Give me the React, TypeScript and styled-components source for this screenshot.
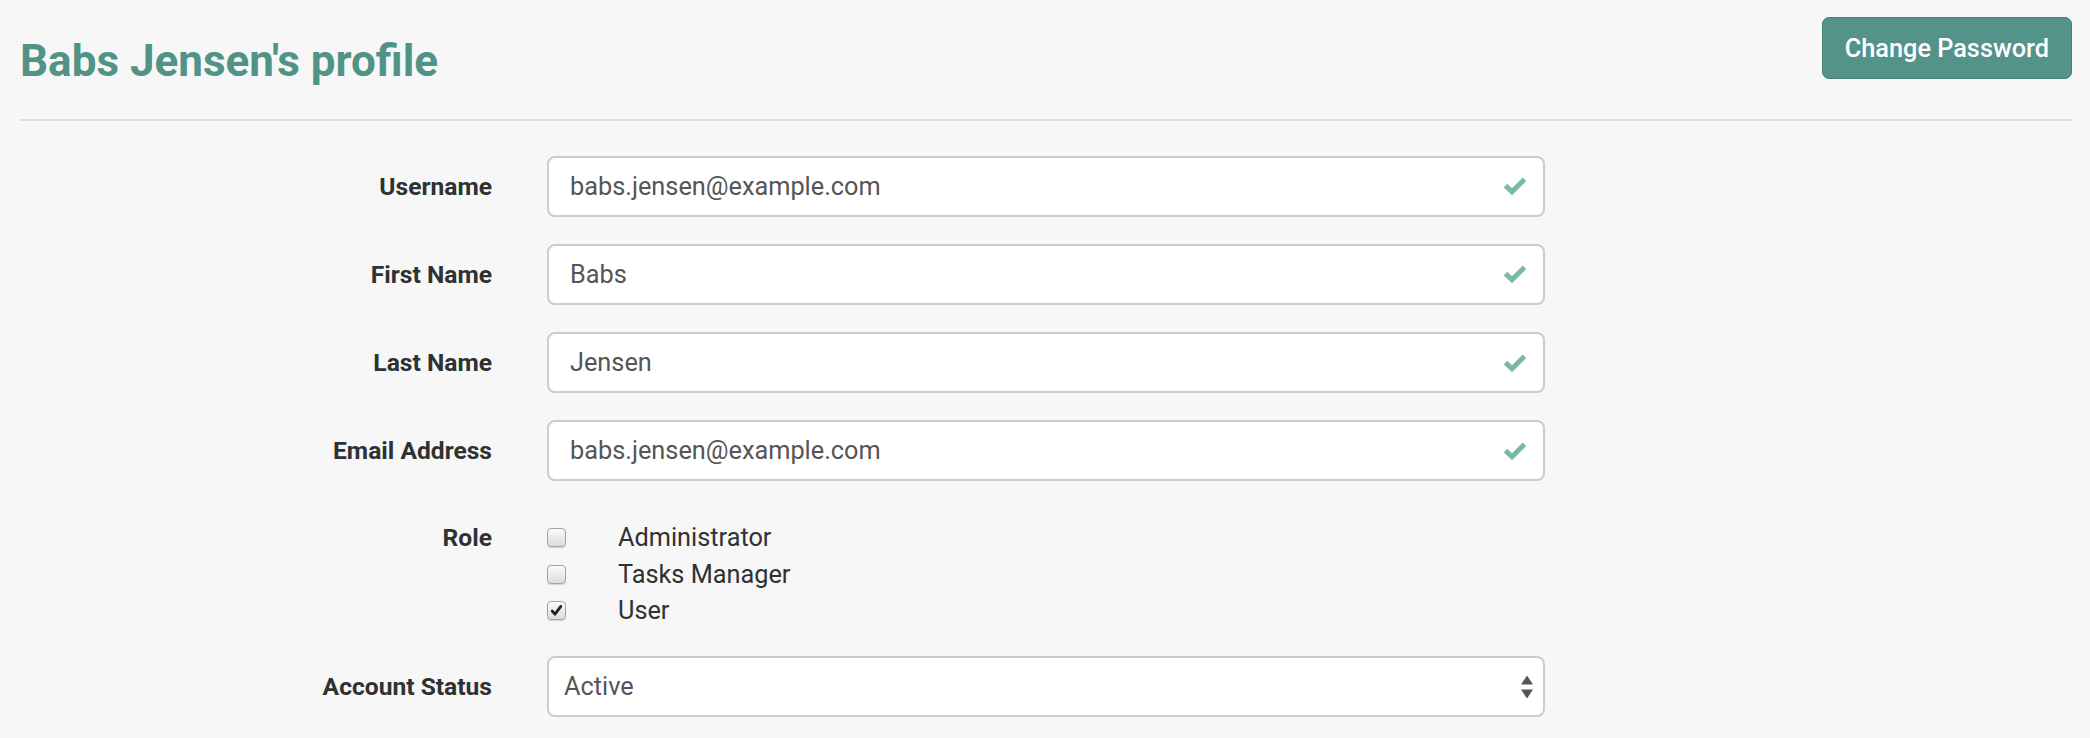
import React from "react";
import styled, { createGlobalStyle } from "styled-components";

const GlobalStyle = createGlobalStyle`
  html, body {
    margin: 0;
    padding: 0;
    background: #f7f7f7;
  }
  body {
    font-family: Roboto, "Helvetica Neue", Arial, sans-serif;
    color: #333;
  }
  * {
    box-sizing: border-box;
  }
`;

const Page = styled.div`
  padding: 0 18px 0 20px;
  min-height: 738px;
`;

const Header = styled.header`
  display: flex;
  justify-content: space-between;
  align-items: flex-start;
  padding-top: 17px;
`;

const Title = styled.h1`
  margin: 20px 0 0;
  font-size: 44px;
  line-height: 48px;
  font-weight: 700;
  color: #519487;
`;

const PrimaryButton = styled.button`
  height: 62px;
  padding: 0 22px;
  background: #53938a;
  border: 1px solid #47837a;
  border-radius: 7px;
  color: #fff;
  font-family: inherit;
  font-size: 25.3px;
  font-weight: 500;
  cursor: pointer;
`;

const Divider = styled.hr`
  margin: 34px 0 0;
  border: 0;
  height: 2px;
  background: #dddddd;
`;

const Form = styled.form`
  margin-top: 34.5px;
`;

const Row = styled.div<{ $top?: boolean }>`
  display: grid;
  grid-template-columns: 472px 998px;
  column-gap: 55px;
  align-items: ${(p) => (p.$top ? "start" : "center")};
  margin-bottom: 27.3px;
  padding-top: ${(p) => (p.$top ? "11px" : "0")};
`;

const Label = styled.label<{ $line?: boolean }>`
  text-align: right;
  font-size: 24.6px;
  font-weight: 700;
  color: #2f3133;
  line-height: ${(p) => (p.$line ? "36.5px" : "normal")};
`;

const Field = styled.div`
  position: relative;
`;

const TextInput = styled.input`
  display: block;
  width: 100%;
  height: 61px;
  padding: 0 60px 0 21px;
  border: 2px solid #cccccc;
  border-radius: 8px;
  background: #fff;
  font-family: inherit;
  font-size: 25.3px;
  color: #555;
  outline: none;
`;

const Select = styled.select`
  display: block;
  width: 100%;
  height: 61px;
  padding: 0 50px 0 15px;
  border: 2px solid #cccccc;
  border-radius: 8px;
  background: #fff;
  font-family: inherit;
  font-size: 25.3px;
  color: #555;
  appearance: none;
  -webkit-appearance: none;
  outline: none;
`;

const FeedbackIcon = styled.svg`
  position: absolute;
  right: 19px;
  top: 50%;
  transform: translateY(-50%);
  pointer-events: none;
`;

const SelectArrows = styled.svg`
  position: absolute;
  right: 12px;
  top: 50%;
  transform: translateY(-50%);
  pointer-events: none;
`;

const CheckList = styled.div`
  display: flex;
  flex-direction: column;
`;

const CheckItem = styled.label`
  display: grid;
  grid-template-columns: 19px 1fr;
  column-gap: 52px;
  align-items: center;
  height: 36.5px;
  font-size: 25.3px;
  color: #2f3133;
`;

const Box = styled.span`
  width: 19px;
  height: 19px;
  border: 1px solid #a4a4a4;
  border-radius: 4px;
  background: linear-gradient(#fbfbfb, #dcdcdc);
  box-shadow: 0 1px 1px rgba(0, 0, 0, 0.15);
  display: flex;
  align-items: center;
  justify-content: center;
`;

const OkIcon = () => (
  <FeedbackIcon width="22" height="19" viewBox="0 0 22 19">
    <path
      d="M1.5 9.2 L8 15.2 L20.5 2.8"
      fill="none"
      stroke="#7ab8a8"
      strokeWidth="5"
      strokeLinejoin="miter"
    />
  </FeedbackIcon>
);

const Checkbox = ({ checked }: { checked?: boolean }) => (
  <Box>
    {checked && (
      <svg width="13" height="13" viewBox="0 0 12 12">
        <path
          d="M2 6.5 L4.6 9.4 L10 2.2"
          fill="none"
          stroke="#222"
          strokeWidth="2.6"
          strokeLinecap="round"
          strokeLinejoin="round"
        />
      </svg>
    )}
  </Box>
);

const textFields = [
  { label: "Username", value: "babs.jensen@example.com" },
  { label: "First Name", value: "Babs" },
  { label: "Last Name", value: "Jensen" },
  { label: "Email Address", value: "babs.jensen@example.com" },
];

const roles = [
  { name: "Administrator", checked: false },
  { name: "Tasks Manager", checked: false },
  { name: "User", checked: true },
];

export default function App() {
  return (
    <>
      <GlobalStyle />
      <Page>
        <Header>
          <Title>Babs Jensen's profile</Title>
          <PrimaryButton type="button">Change Password</PrimaryButton>
        </Header>
        <Divider />
        <Form onSubmit={(e) => e.preventDefault()}>
          {textFields.map((f) => (
            <Row key={f.label}>
              <Label>{f.label}</Label>
              <Field>
                <TextInput readOnly value={f.value} />
                <OkIcon />
              </Field>
            </Row>
          ))}
          <Row $top>
            <Label $line>Role</Label>
            <CheckList>
              {roles.map((r) => (
                <CheckItem key={r.name}>
                  <Checkbox checked={r.checked} />
                  <span>{r.name}</span>
                </CheckItem>
              ))}
            </CheckList>
          </Row>
          <Row>
            <Label>Account Status</Label>
            <Field>
              <Select defaultValue="active">
                <option value="active">Active</option>
                <option value="inactive">Inactive</option>
              </Select>
              <SelectArrows width="12" height="23" viewBox="0 0 12 23">
                <path d="M6 0 L12 9 L0 9 Z" fill="#555" />
                <path d="M0 14 L12 14 L6 23 Z" fill="#555" />
              </SelectArrows>
            </Field>
          </Row>
        </Form>
      </Page>
    </>
  );
}
